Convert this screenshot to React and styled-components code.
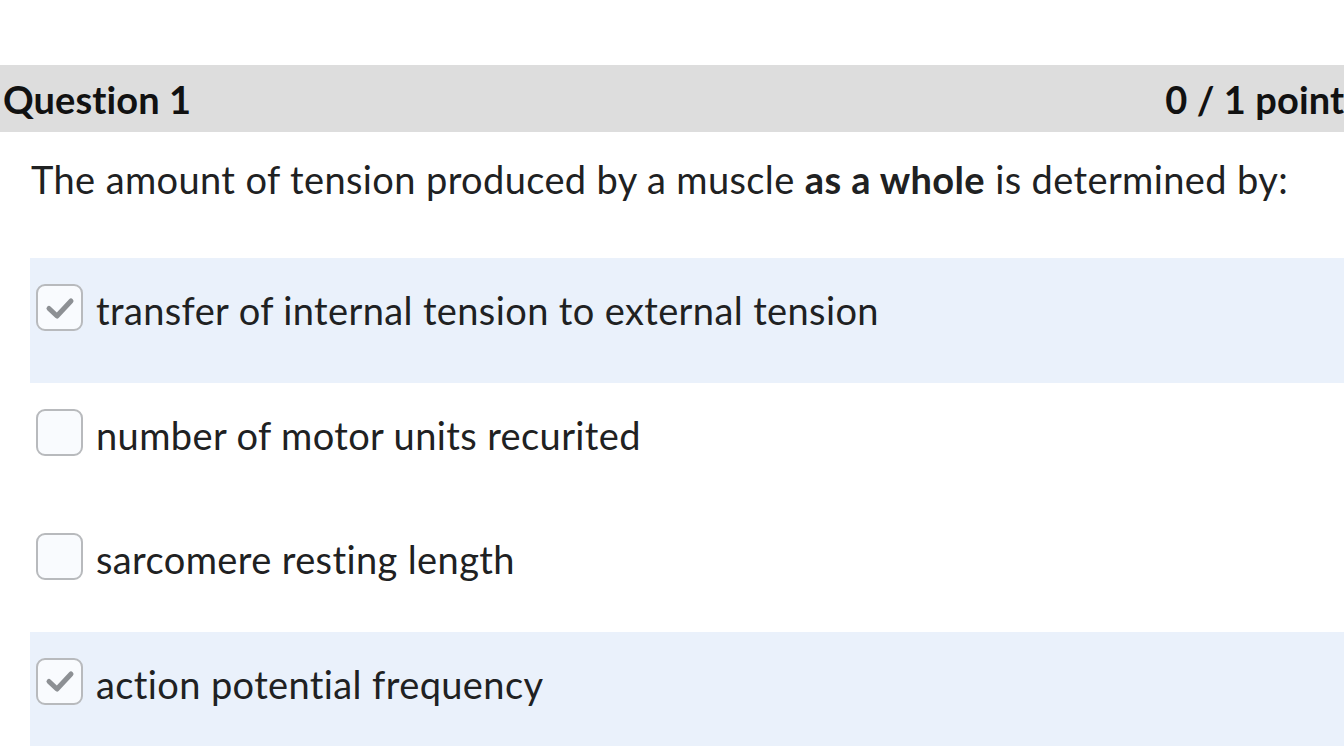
import React from "react";
import styled, { createGlobalStyle } from "styled-components";

const Global = createGlobalStyle`
  html, body { margin: 0; padding: 0; background: #ffffff; overflow: hidden; }
  body {
    font-family: Lato, "Open Sans", sans-serif;
    color: #202122;
    font-variant-ligatures: none;
    font-feature-settings: "liga" 0, "clig" 0;
  }
`;

const Page = styled.div`
  width: calc(100% + 17px);
  padding-top: 65px;
`;

const Header = styled.div`
  height: 67px;
  background: #dddddd;
  display: flex;
  align-items: center;
  justify-content: space-between;
  padding: 0 0 0 3px;
  font-size: 38px;
  font-weight: 700;
  letter-spacing: 0.1px;
  color: #111111;
`;

const Points = styled.span`
  white-space: nowrap;
`;

const Prompt = styled.p`
  margin: 0;
  padding: 25px 0 0 31px;
  font-size: 38px;
  letter-spacing: 0.38px;
  line-height: 44px;
  color: #202122;
  b { font-weight: 700; }
`;

const Options = styled.div`
  margin: 57px 0 0 30px;
  display: flex;
  flex-direction: column;
`;

const Row = styled.div`
  height: 124.67px;
  background: ${p => (p.$checked ? "#eaf1fb" : "transparent")};
  display: flex;
  align-items: flex-start;
  padding: 26px 0 0 6px;
  box-sizing: border-box;
  gap: 13px;
`;

const Box = styled.span`
  width: 47px;
  height: 47px;
  box-sizing: border-box;
  border: 2px solid #b8babd;
  border-radius: 9px;
  background: #f9fbfe;
  display: flex;
  align-items: center;
  justify-content: center;
  flex: none;
`;

const Label = styled.span`
  font-size: 38px;
  letter-spacing: 0.38px;
  line-height: 47px;
  color: #202122;
  padding-top: 3px;
`;

const Check = () => (
  <svg width="30" height="26" viewBox="0 0 30 26">
    <path d="M4 13.5 L12 21 L26 6" fill="none" stroke="#8d9094" strokeWidth="5" strokeLinecap="round" strokeLinejoin="round" />
  </svg>
);

const options = [
  { text: "transfer of internal tension to external tension", checked: true },
  { text: "number of motor units recurited", checked: false },
  { text: "sarcomere resting length", checked: false },
  { text: "action potential frequency", checked: true },
];

export default function App() {
  return (
    <Page>
      <Global />
      <Header>
        <span>Question 1</span>
        <Points>0 / 1 points</Points>
      </Header>
      <Prompt>
        The amount of tension produced by a muscle <b>as a whole</b> is determined by:
      </Prompt>
      <Options>
        {options.map((o, i) => (
          <Row key={i} $checked={o.checked}>
            <Box>{o.checked && <Check />}</Box>
            <Label>{o.text}</Label>
          </Row>
        ))}
      </Options>
    </Page>
  );
}
